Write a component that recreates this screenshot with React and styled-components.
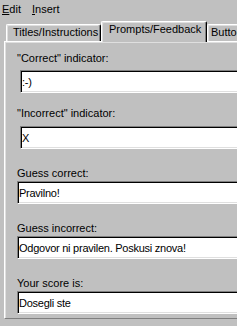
import React from "react";
import styled, { createGlobalStyle } from "styled-components";

const GlobalStyle = createGlobalStyle`
  html, body {
    margin: 0;
    padding: 0;
    background: #c0c0c0;
    overflow: hidden;
  }
  body {
    font-family: "Liberation Sans", Arial, sans-serif;
    font-size: 11px;
    color: #000;
  }
`;

const Window = styled.div`
  width: 237px;
  height: 326px;
  background: #c0c0c0;
  overflow: hidden;
`;

const MenuBar = styled.div`
  display: flex;
  gap: 11px;
  height: 20px;
  padding: 3px 0 0 2px;
  box-sizing: border-box;
  line-height: 13px;
`;

const MenuItem = styled.span`
  white-space: nowrap;
`;

const Accel = styled.span`
  text-decoration: underline;
  text-underline-offset: 1px;
`;

const TabStrip = styled.div`
  display: flex;
  align-items: flex-end;
  height: 21px;
  padding-left: 6px;
  position: relative;
  z-index: 1;
`;

const Tab = styled.div`
  box-sizing: border-box;
  height: ${({ $active }) => ($active ? "21px" : "17px")};
  width: ${({ $width }) => $width}px;
  flex-shrink: 0;
  padding: 1px 0 0 ${({ $pad }) => $pad}px;
  line-height: 13px;
  white-space: nowrap;
  overflow: hidden;
  background: #c0c0c0;
  border-top: 1px solid #fff;
  border-left: 1px solid #fff;
  border-right: 1px solid #000;
  box-shadow: inset -1px 0 0 #808080, inset 1px 1px 0 #dfdfdf;
  border-radius: 2px 2px 0 0;
  margin-bottom: ${({ $active }) => ($active ? "-1px" : "0")};
`;

const Panel = styled.div`
  margin-left: 4px;
  width: 260px;
  height: 278px;
  box-sizing: border-box;
  border-top: 1px solid #fff;
  border-left: 1px solid #fff;
  border-bottom: 1px solid #808080;
  box-shadow: inset 1px 1px 0 #dfdfdf;
  padding-top: 10px;
`;

const Field = styled.div`
  margin-top: ${({ $top }) => $top}px;
`;

const Label = styled.div`
  line-height: 13px;
  padding-left: 12px;
  white-space: nowrap;
`;

const TextBox = styled.input`
  display: block;
  box-sizing: border-box;
  margin: ${({ $gap }) => $gap}px 0 0 ${({ $indent }) => $indent}px;
  width: 240px;
  height: 23px;
  padding: 0 0 0 1px;
  font: inherit;
  font-size: 11px;
  letter-spacing: -0.25px;
  color: #000;
  background: #fff;
  border: 1px solid;
  border-color: #808080 #fff #fff #808080;
  box-shadow: inset 1px 1px 0 #000, inset -1px -1px 0 #dfdfdf;
  outline: none;
`;

const fields = [
  { label: "\"Correct\" indicator:", value: ":-)", top: 0, gap: 5, indent: 15 },
  { label: "\"Incorrect\" indicator:", value: "X", top: 14, gap: 6, indent: 15 },
  { label: "Guess correct:", value: "Pravilno!", top: 18, gap: 1, indent: 12 },
  { label: "Guess incorrect:", value: "Odgovor ni pravilen. Poskusi znova!", top: 18, gap: 1, indent: 12 },
  { label: "Your score is:", value: "Dosegli ste", top: 18, gap: 1, indent: 12 },
];

export default function App() {
  return (
    <Window>
      <GlobalStyle />
      <MenuBar>
        <MenuItem>
          <Accel>E</Accel>dit
        </MenuItem>
        <MenuItem>
          <Accel>I</Accel>nsert
        </MenuItem>
      </MenuBar>
      <TabStrip>
        <Tab $width={95} $pad={6}>Titles/Instructions</Tab>
        <Tab $active $width={106} $pad={7}>Prompts/Feedback</Tab>
        <Tab $width={40} $pad={3}>Buttons</Tab>
      </TabStrip>
      <Panel>
        {fields.map((f) => (
          <Field key={f.label} $top={f.top}>
            <Label>{f.label}</Label>
            <TextBox readOnly defaultValue={f.value} $gap={f.gap} $indent={f.indent} />
          </Field>
        ))}
      </Panel>
    </Window>
  );
}
